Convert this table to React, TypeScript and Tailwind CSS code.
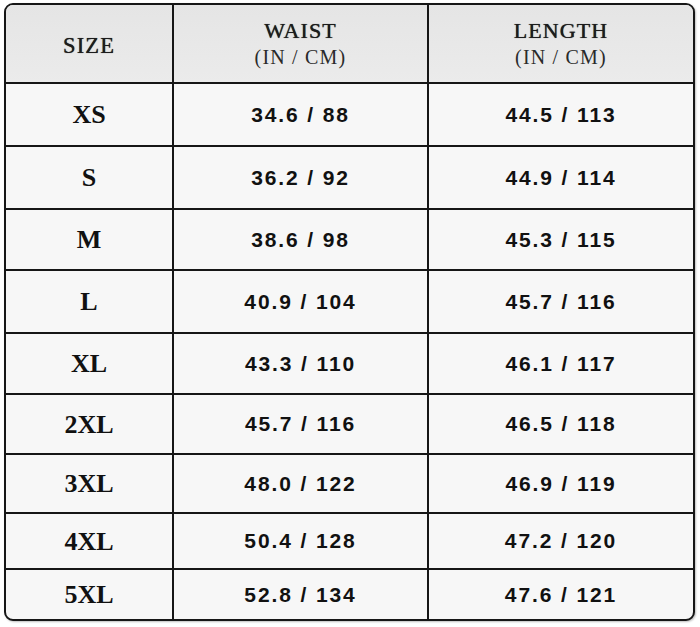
const rows = [
  { size: "XS", waist: "34.6 / 88", length: "44.5 / 113", h: "h-[63px]" },
  { size: "S", waist: "36.2 / 92", length: "44.9 / 114", h: "h-[63px]" },
  { size: "M", waist: "38.6 / 98", length: "45.3 / 115", h: "h-[61px]" },
  { size: "L", waist: "40.9 / 104", length: "45.7 / 116", h: "h-[63px]" },
  { size: "XL", waist: "43.3 / 110", length: "46.1 / 117", h: "h-[61px]" },
  { size: "2XL", waist: "45.7 / 116", length: "46.5 / 118", h: "h-[60px]" },
  { size: "3XL", waist: "48.0 / 122", length: "46.9 / 119", h: "h-[59px]" },
  { size: "4XL", waist: "50.4 / 128", length: "47.2 / 120", h: "h-[56px]" },
  { size: "5XL", waist: "52.8 / 134", length: "47.6 / 121", h: "h-[49px]" },
];

const serif = "font-['Liberation_Serif',serif]";
const sans = "font-['Liberation_Sans',Arial,sans-serif]";
const heavy = "[text-shadow:0_0_0.7px_#1c1c1c]";

export default function App() {
  return (
    <div className="min-h-[627px] w-[700px] bg-white pl-[4px] pt-[3px]">
      <div className="w-[691px] overflow-hidden rounded-[9px] border-2 border-[#161616] bg-[#f7f7f7] shadow-[1px_1px_2px_rgba(0,0,0,0.25)]">
        <div className="grid h-[79px] grid-cols-[168px_255px_1fr] border-b-2 border-[#161616] bg-gradient-to-b from-[#e5e5e5] to-[#ebebeb] text-[#1c1c1c]">
          <div className={`flex items-center justify-center border-r-2 border-[#161616] pt-[4px] text-[22.5px] tracking-[0.05em] ${heavy} ${serif}`}>
            SIZE
          </div>
          <div className={`flex flex-col items-center justify-center border-r-2 border-[#161616] pt-[1px] ${serif}`}>
            <span className={`text-[22px] leading-[26px] tracking-[0.05em] ${heavy}`}>WAIST</span>
            <span className="text-[20px] leading-[26px] tracking-[0.06em] text-[#2a2a2a]">(IN / CM)</span>
          </div>
          <div className={`flex flex-col items-center justify-center pt-[1px] ${serif}`}>
            <span className={`text-[22px] leading-[26px] tracking-[0.05em] ${heavy}`}>LENGTH</span>
            <span className="text-[20px] leading-[26px] tracking-[0.06em] text-[#2a2a2a]">(IN / CM)</span>
          </div>
        </div>
        {rows.map((r, i) => (
          <div
            key={r.size}
            className={`grid grid-cols-[168px_255px_1fr] ${r.h} ${i < rows.length - 1 ? "border-b-2 border-[#161616]" : ""} text-[#111]`}
          >
            <div className={`flex items-center justify-center border-r-2 border-[#161616] text-[26px] font-bold ${serif}`}>
              {r.size}
            </div>
            <div className={`flex items-center justify-center border-r-2 border-[#161616] text-[21px] font-bold tracking-[0.09em] ${sans}`}>
              {r.waist}
            </div>
            <div className={`flex items-center justify-center text-[21px] font-bold tracking-[0.09em] ${sans}`}>
              {r.length}
            </div>
          </div>
        ))}
      </div>
    </div>
  );
}
